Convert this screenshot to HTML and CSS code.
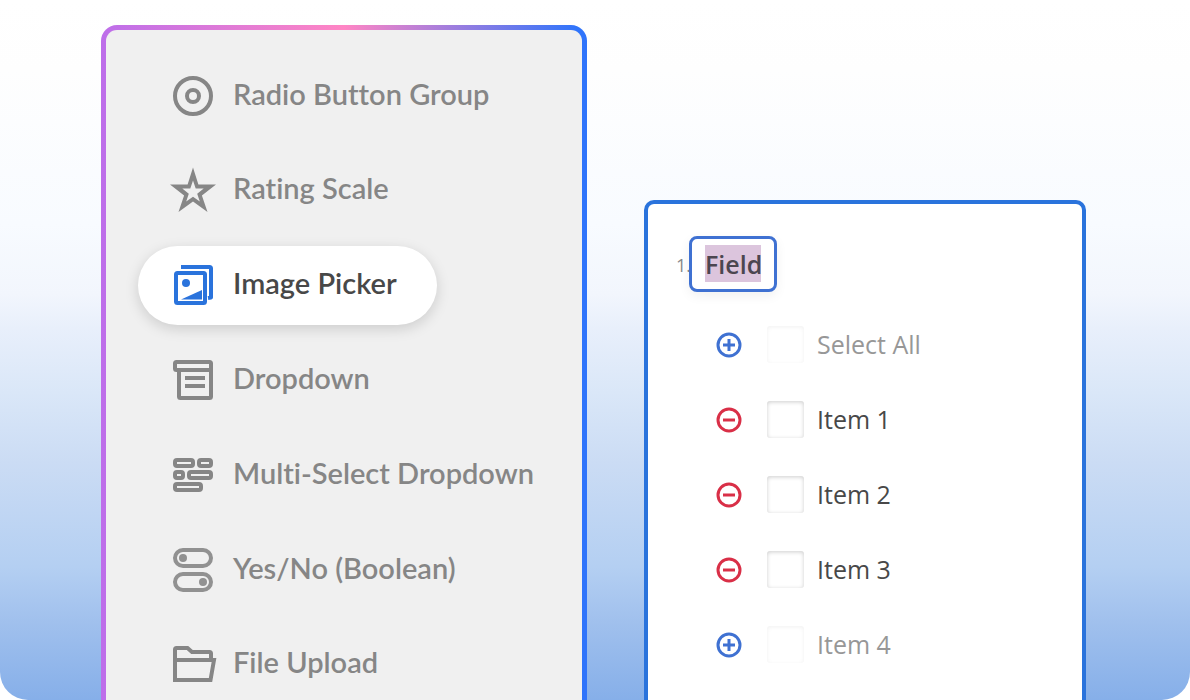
FILE: index.html
```html
<!DOCTYPE html>
<html lang="en">
<head>
<meta charset="utf-8">
<meta name="viewport" content="width=device-width, initial-scale=1">
<title>Image Picker</title>
<link rel="stylesheet" href="styles.css">
</head>
<body>
<main class="stage">
  <nav class="palette" aria-label="Question types">
    <ul class="palette-list">
      <li><button type="button" class="tool">
        <svg class="icon" viewBox="0 0 44 44"><g fill="none" stroke="currentColor" stroke-width="4"><circle cx="22" cy="22" r="18"/><circle cx="22" cy="22" r="6"/></g></svg>
        <span>Radio Button Group</span></button></li>
      <li><button type="button" class="tool">
        <svg class="icon" viewBox="0 0 44 44"><path fill="currentColor" fill-rule="evenodd" d="M22 -0.500L27.400 16.500H45L30.900 27.500L36.500 44L22 33.500L7.500 44L13.100 27.500L-1 16.500H16.600ZM22 12.500L19.300 20.500H11.300L17.800 25.700L15.200 33.500L22 28.700L28.800 33.500L26.200 25.700L32.700 20.500H24.700Z"/></svg>
        <span>Rating Scale</span></button></li>
      <li><button type="button" class="tool tool-active" aria-current="true">
        <svg class="icon icon-blue" viewBox="0 0 44 44"><g fill="none" stroke="currentColor" stroke-width="4" stroke-linejoin="round"><rect x="5" y="10" width="29" height="30" rx="1.500"/><path d="M10 4H38.500Q40 4 40 5.500V34.500L37 35"/></g><path fill="currentColor" d="M10 36.500L31 27V36.500Z"/><circle cx="15" cy="20" r="4" fill="currentColor"/></svg>
        <span>Image Picker</span></button></li>
      <li><button type="button" class="tool">
        <svg class="icon" viewBox="0 0 44 44"><g fill="none" stroke="currentColor" stroke-width="4"><path stroke-linejoin="round" d="M8 12H5.500Q4 12 4 10.500V5.500Q4 4 5.500 4H38.500Q40 4 40 5.500V38.500Q40 40 38.500 40H9.500Q8 40 8 38.500V12H40"/><path d="M14 20H34M14 28H34"/></g></svg>
        <span>Dropdown</span></button></li>
      <li><button type="button" class="tool">
        <svg class="icon" viewBox="0 0 44 44"><g fill="none" stroke="currentColor" stroke-width="4"><rect x="4" y="7" width="18" height="6" rx="2"/><rect x="28" y="7" width="12" height="6" rx="2"/><rect x="4" y="19" width="8" height="6" rx="2"/><rect x="18" y="19" width="22" height="6" rx="2"/><rect x="4" y="31" width="26" height="6" rx="2"/></g></svg>
        <span>Multi-Select Dropdown</span></button></li>
      <li><button type="button" class="tool tool-soft">
        <svg class="icon" viewBox="0 0 44 44"><g fill="none" stroke="currentColor" stroke-width="4"><rect x="4" y="2" width="36" height="16" rx="8"/><rect x="4" y="26" width="36" height="16" rx="8"/></g><circle cx="12" cy="10" r="4" fill="currentColor"/><circle cx="32" cy="34" r="4" fill="currentColor"/></svg>
        <span>Yes/No (Boolean)</span></button></li>
      <li><button type="button" class="tool">
        <svg class="icon" viewBox="0 0 44 44"><g fill="none" stroke="currentColor" stroke-width="4"><path d="M4 38V7.500Q4 6 5.500 6H16.500L21 10H38.500Q40 10 40 11.500V18M4 18H43L39.500 38H2"/></g></svg>
        <span>File Upload</span></button></li>
    </ul>
  </nav>

  <section class="editor" aria-label="Question editor">
    <div class="question">
      <span class="number">1.</span>
      <input class="title" type="text" value="Field" aria-label="Question title">
    </div>
    <ul class="choices">
      <li class="choice choice-muted">
        <button type="button" class="action action-add" aria-label="Add Select All"><svg viewBox="0 0 26 26"><circle cx="13" cy="13" r="11"/><path d="M7 13H19M13 7V19"/></svg></button>
        <input class="box" type="checkbox" id="c0"><label for="c0">Select All</label></li>
      <li class="choice">
        <button type="button" class="action action-remove" aria-label="Remove Item 1"><svg viewBox="0 0 26 26"><circle cx="13" cy="13" r="11"/><path d="M7 13H19"/></svg></button>
        <input class="box" type="checkbox" id="c1"><label for="c1">Item 1</label></li>
      <li class="choice">
        <button type="button" class="action action-remove" aria-label="Remove Item 2"><svg viewBox="0 0 26 26"><circle cx="13" cy="13" r="11"/><path d="M7 13H19"/></svg></button>
        <input class="box" type="checkbox" id="c2"><label for="c2">Item 2</label></li>
      <li class="choice">
        <button type="button" class="action action-remove" aria-label="Remove Item 3"><svg viewBox="0 0 26 26"><circle cx="13" cy="13" r="11"/><path d="M7 13H19"/></svg></button>
        <input class="box" type="checkbox" id="c3"><label for="c3">Item 3</label></li>
      <li class="choice choice-muted">
        <button type="button" class="action action-add" aria-label="Add Item 4"><svg viewBox="0 0 26 26"><circle cx="13" cy="13" r="11"/><path d="M7 13H19M13 7V19"/></svg></button>
        <input class="box" type="checkbox" id="c4"><label for="c4">Item 4</label></li>
    </ul>
  </section>
</main>
</body>
</html>
```
FILE: styles.css
```css
* { box-sizing: border-box; }
body { margin: 0; background: #fff; }
ul { list-style: none; margin: 0; padding: 0; }
button { border: 0; background: none; padding: 0; font: inherit; color: inherit; cursor: pointer; }

.stage {
  display: grid;
  grid-template-columns: minmax(0, 486fr) minmax(0, 442fr);
  column-gap: 57px;
  height: 100vh;
  padding: 0 104px 0 101px;
  overflow: hidden;
  border-radius: 0 0 28px 28px;
  background: linear-gradient(#fff 0%, #fefefe 10%, #f8fbff 32%, #f2f6fd 42%, #e8effb 47%, #dae7f8 56%, #cbdcf4 66%, #b4cff2 81%, #a0c0ed 89%, #86afe9 100%);
}

.palette {
  display: flex;
  flex-direction: column;
  margin-top: 25px;
  padding: 5px 5px 0;
  border-radius: 16px 16px 0 0;
  background: linear-gradient(90deg, #bd6eea 0%, #ff85c4 50%, #2f74fb 98%);
}
.palette-list {
  flex: 1;
  display: flex;
  flex-direction: column;
  justify-content: space-between;
  margin-bottom: -4px;
  padding: 26px 0 0 32px;
  border-radius: 11px 11px 0 0;
  background: #f0f0f0;
}
.tool {
  display: flex;
  align-items: center;
  gap: 18px;
  height: 79px;
  padding: 0 40px 0 33px;
  border-radius: 40px;
  color: #868686;
  font: 600 29px/34px "Lato", "Open Sans", sans-serif;
  font-variant-ligatures: none;
  white-space: nowrap;
}
.tool span { padding-bottom: 4px; }
.tool-active {
  background: #fff;
  color: #484848;
  box-shadow: 0 4px 14px rgba(0, 0, 0, 0.15);
}
.tool-soft .icon { color: #919191; }
.icon { width: 44px; height: 44px; overflow: visible; flex: none; }
.icon-blue { color: #2a73dc; }

.editor {
  margin-top: 200px;
  padding: 32px 28px 0;
  border: 4px solid #2a73dc;
  border-bottom: 0;
  border-radius: 10px 10px 0 0;
  background: #fff;
  font-family: "Open Sans", "Noto Sans", sans-serif;
  color: #484848;
}
.question { display: flex; align-items: center; }
.number { width: 13px; padding-top: 2px; font-size: 18px; line-height: 26px; color: #8a8a8a; }
.title {
  width: 88px;
  height: 56px;
  padding: 6px 13px 7px;
  border: 3px solid #3f71d2;
  border-radius: 8px;
  outline: 0;
  background: linear-gradient(#dcc5dd, #dcc5dd) content-box, #fff;
  box-shadow: 0 4px 12px rgba(0, 0, 0, 0.06);
  font: 600 25px/37px "Open Sans", sans-serif;
  color: #4c4650;
}
.choices { padding: 15px 0 0 40px; }
.choice { display: flex; align-items: center; height: 75px; font-size: 25px; line-height: 34px; }
.choice label { padding-bottom: 2px; }
.choice-muted label { color: #979797; }
.action { display: flex; flex: none; margin-right: 25px; }
.action svg { width: 26px; height: 26px; fill: none; stroke: currentColor; stroke-width: 3; }
.action-add { color: #3f71d2; }
.action-remove { color: #d92f47; }
.box {
  appearance: none;
  flex: none;
  width: 37px;
  height: 37px;
  margin: 0 13px 0 0;
  border-radius: 3px;
  background: #fff;
  box-shadow: inset 0 1px 4px rgba(0, 0, 0, 0.2);
}
.choice-muted .box { box-shadow: inset 0 1px 4px rgba(0, 0, 0, 0.06); }
```
